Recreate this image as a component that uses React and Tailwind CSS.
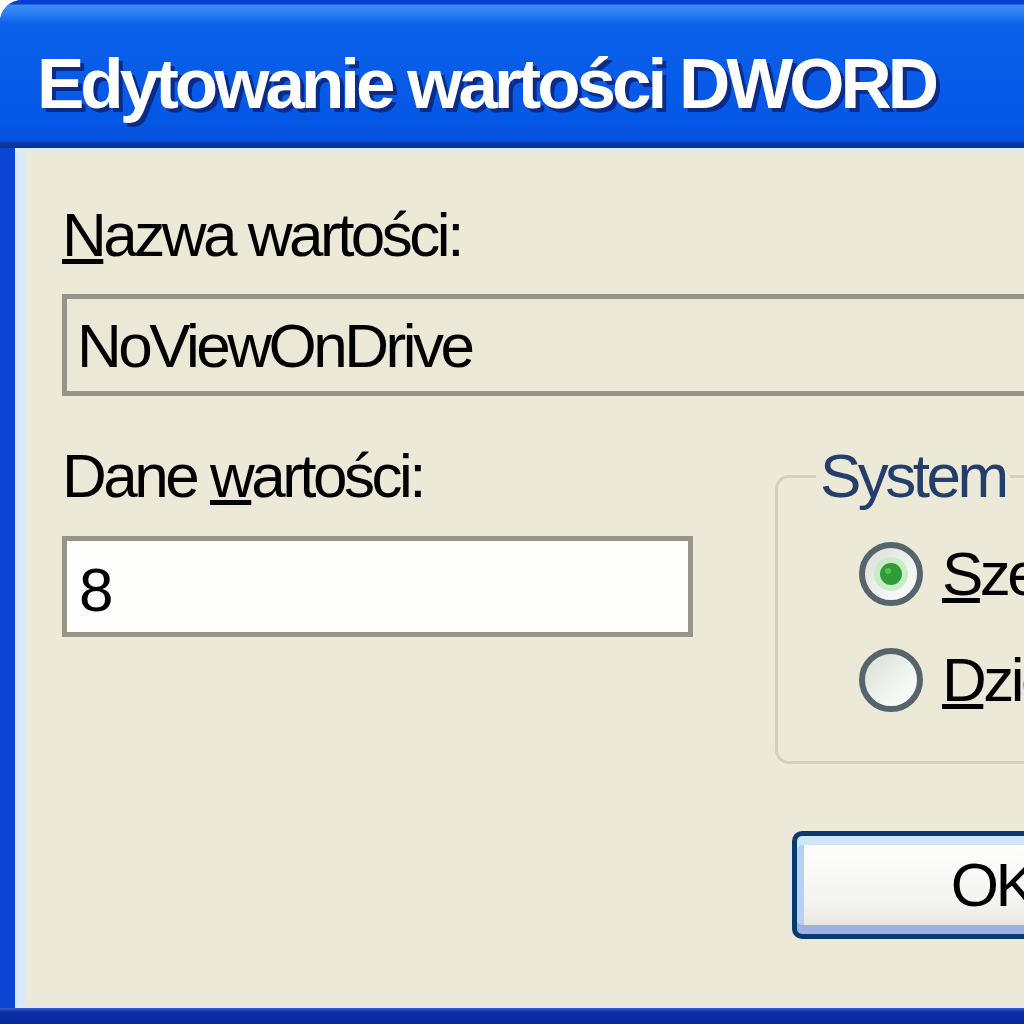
import React from 'react'

const Radio = ({ checked, id }) => (
    <svg width="66" height="66" viewBox="0 0 66 66" className="shrink-0">
        <defs>
            <linearGradient id={id} x1="0" y1="0" x2="1" y2="1">
                <stop offset="0" stopColor="#d9dbd3" />
                <stop offset="0.6" stopColor="#f1f5f1" />
                <stop offset="1" stopColor="#ffffff" />
            </linearGradient>
        </defs>
        <circle cx="33" cy="33" r="29" fill={`url(#${id})`} stroke="#56646b" strokeWidth="6" />
        {checked && (
            <>
                <circle cx="33" cy="33" r="17" fill="#c8ecc8" />
                <circle cx="33" cy="33" r="11" fill="#2f9d36" />
                <circle cx="30" cy="30" r="3" fill="#55c05a" />
            </>
        )}
    </svg>
)

const App = () => {
    return (
        <div className="w-[1024px] h-[1024px] overflow-hidden bg-white font-['Liberation_Sans',Arial,sans-serif]">
            <div className="h-full flex flex-col rounded-tl-[22px] overflow-hidden bg-[#0a45d6]">
                <div className="h-[148px] shrink-0 pl-[37px] pt-[48px] bg-[linear-gradient(to_bottom,#0b3fd1_0px,#0b3fd1_4px,#3d8df5_5px,#2a7df2_14px,#0a60ea_24px,#0558e6_120px,#0652dc_140px,#0a3aa8_143px,#08328f_148px)]">
                    <span className="block text-[71px] leading-[71px] font-bold tracking-[-4px] text-white whitespace-nowrap [text-shadow:4px_4px_0_#0c2a86]">
                        Edytowanie wartości DWORD
                    </span>
                </div>
                <div className="flex-1 flex min-h-0">
                    <div className="w-[15px] shrink-0 bg-[#0a45d6]" />
                    <div className="flex-1 min-w-0 overflow-hidden bg-[#ece9d8] border-l-[10px] border-l-[#d8e9fa] border-t-[4px] border-t-[#dfe8f3] border-b-[3px] border-b-[#e4e9ef] pl-[37px] pt-[52px] text-[62px] leading-[62px] tracking-[-3.5px] text-black">
                        <div className="whitespace-nowrap">
                            <u className="decoration-[length:5px] underline-offset-[3px]">N</u>azwa wartości:
                        </div>
                        <div className="mt-[28px] w-[1000px] h-[102px] border-[5px] border-[#96958a] bg-[#ece8d8] pl-[10px] pt-[16px] whitespace-nowrap">
                            NoViewOnDrive
                        </div>
                        <div className="mt-[49px] flex gap-[82px]">
                            <div className="w-[631px] shrink-0">
                                <div className="whitespace-nowrap">
                                    Dane <u className="decoration-[length:5px] underline-offset-[3px]">w</u>artości:
                                </div>
                                <div className="mt-[29px] h-[101px] border-[5px] border-[#96958a] bg-[#fdfdfb] pl-[12px] pt-[18px]">
                                    8
                                </div>
                            </div>
                            <div className="w-[420px] shrink-0">
                                <fieldset className="border-[3px] border-[#d2d0bf] rounded-[14px] pb-[48px]">
                                    <legend className="ml-[38px] px-[4px] text-[#243e6c] whitespace-nowrap">System</legend>
                                    <div className="mt-[34px] pl-[80px] flex items-center gap-[18px] whitespace-nowrap">
                                        <Radio checked id="r1" />
                                        <span><u className="decoration-[length:5px] underline-offset-[3px]">S</u>zesnastkowy</span>
                                    </div>
                                    <div className="mt-[40px] pl-[80px] flex items-center gap-[18px] whitespace-nowrap">
                                        <Radio id="r2" />
                                        <span><u className="decoration-[length:5px] underline-offset-[3px]">D</u>ziesiętny</span>
                                    </div>
                                </fieldset>
                                <div className="mt-[67px] ml-[17px] w-[400px] h-[108px] border-[5px] border-[#0b3a6f] rounded-[10px] bg-[linear-gradient(to_bottom,#ffffff,#f3f3ef_70%,#e4e3dc)] shadow-[inset_0_9px_0_#cfe6f6,inset_0_-9px_0_#9cb0e2,inset_7px_0_0_#b9d0f2] flex items-center justify-center">
                                    OK
                                </div>
                            </div>
                        </div>
                    </div>
                </div>
                <div className="h-[16px] shrink-0 bg-[linear-gradient(to_bottom,#3a5fc8,#0a2ea6_4px,#0829a0)]" />
            </div>
        </div>
    )
}

export default App
